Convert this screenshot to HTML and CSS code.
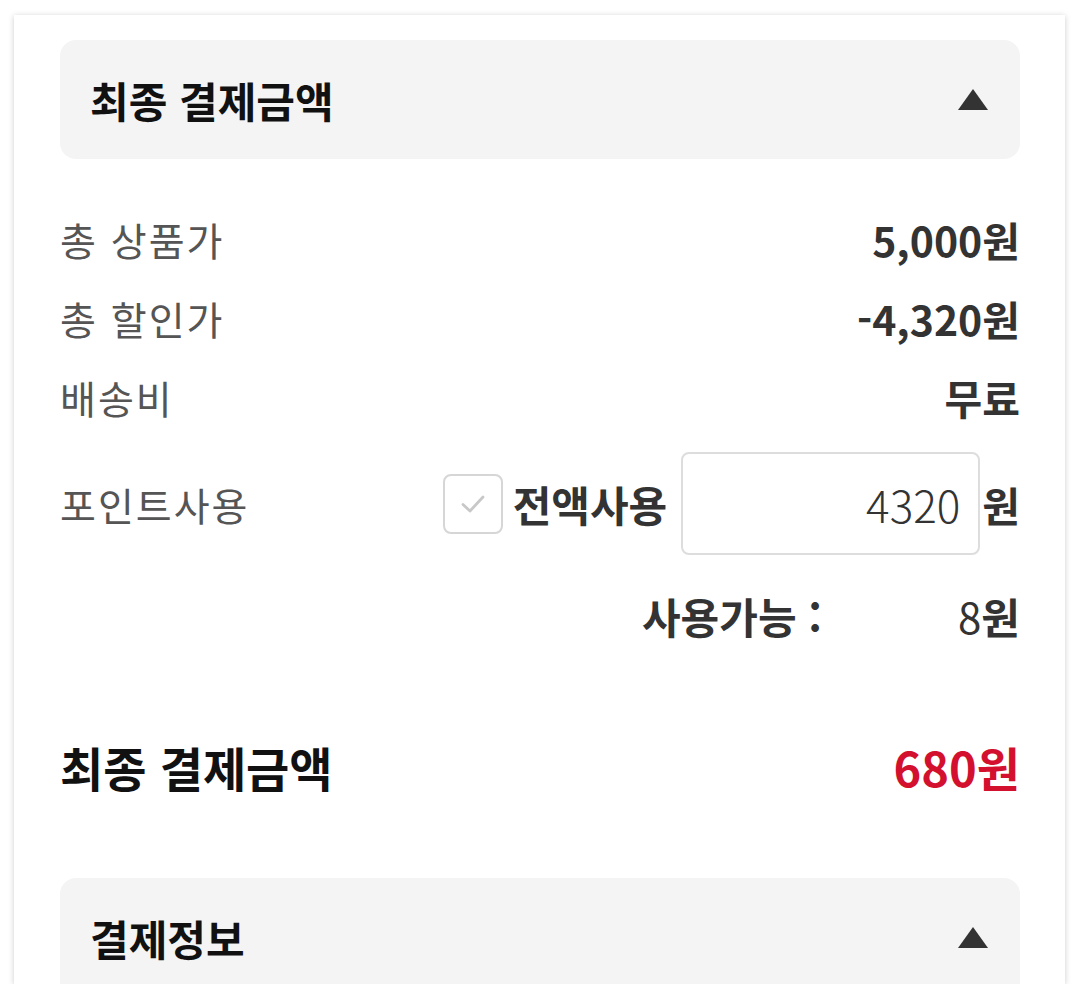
FILE: index.html
```html
<!DOCTYPE html>
<html lang="ko">
<head>
  <meta charset="UTF-8">
  <title>최종 결제금액</title>
  <meta name="viewport" content="width=device-width, initial-scale=1.0">
  <link rel="stylesheet" href="styles.css">
</head>
<body>

<div class="card">

  <!-- 최종 결제금액 아코디언 -->
  <div class="acc-head">
    <h2>최종 결제금액</h2>
    <span class="arrow-up"></span>
  </div>

  <div class="price-list">
    <div class="price-row">
      <span class="label">총 상품가</span>
      <span class="value">5,000원</span>
    </div>
    <div class="price-row">
      <span class="label">총 할인가</span>
      <span class="value">-4,320원</span>
    </div>
    <div class="price-row">
      <span class="label">배송비</span>
      <span class="value">무료</span>
    </div>

    <div class="point-row">
      <span class="label">포인트사용</span>
      <div class="point-ctrl">
        <label class="check-all">
          <span class="checkbox">
            <svg width="36" height="36" viewBox="0 0 36 36"><path d="M8 18.5 L15 25 L28 11" fill="none" stroke="#c8c8c8" stroke-width="2.8" stroke-linecap="round" stroke-linejoin="round"/></svg>
          </span>
          전액사용
        </label>
        <input class="point-input" type="text" value="4320">
        <span class="unit">원</span>
      </div>
    </div>

    <div class="avail-row">
      <span class="avail-label">사용가능 :</span>
      <span class="avail-value"><span class="num">8</span>원</span>
    </div>
  </div>

  <div class="total-row">
    <span class="total-label">최종 결제금액</span>
    <span class="total-value">680원</span>
  </div>

  <!-- 결제정보 아코디언 -->
  <div class="acc-head">
    <h2>결제정보</h2>
    <span class="arrow-up"></span>
  </div>

</div>

</body>
</html>
```

FILE: styles.css
```css
body {
  margin: 0;
  padding: 15px 15px 0 14px;
  background-color: #fff;
  font-family: "Noto Sans CJK KR", "Noto Sans", sans-serif;
  color: #333;
}
.card {
  box-sizing: border-box;
  height: 969px;
  overflow: hidden;
  padding: 25px 45px 0 46px;
  background-color: #fff;
  box-shadow: 0 1px 6px rgba(0, 0, 0, 0.2);
}
.acc-head {
  display: flex;
  align-items: center;
  justify-content: space-between;
  height: 119px;
  padding: 0 32px 0 30px;
  border-radius: 16px;
  background-color: #f4f4f4;
}
.acc-head h2 {
  margin: 0;
  font-size: 42px;
  font-weight: 700;
  color: #111;
}
.arrow-up {
  width: 0;
  height: 0;
  border-left: 15px solid transparent;
  border-right: 15px solid transparent;
  border-bottom: 21px solid #333;
}
.price-list {
  padding-top: 40px;
}
.price-row {
  display: flex;
  align-items: center;
  justify-content: space-between;
  height: 79px;
}
.label {
  font-size: 39px;
  letter-spacing: 2px;
  color: #555;
}
.value {
  font-size: 41px;
  font-weight: 700;
  color: #333;
}
.point-row {
  display: flex;
  align-items: center;
  justify-content: space-between;
  margin-top: 16px;
}
.point-ctrl {
  display: flex;
  align-items: center;
}
.check-all {
  display: flex;
  align-items: center;
  gap: 10px;
  font-size: 42px;
  font-weight: 700;
  color: #333;
}
.checkbox {
  display: flex;
  align-items: center;
  justify-content: center;
  width: 56px;
  height: 56px;
  border: 2px solid #d6d6d6;
  border-radius: 8px;
}
.point-input {
  box-sizing: border-box;
  width: 299px;
  height: 103px;
  margin-left: 14px;
  padding: 0 18px;
  border: 2px solid #ddd;
  border-radius: 8px;
  font-family: "Noto Sans CJK KR", sans-serif;
  font-size: 44px;
  font-weight: 300;
  color: #333;
  text-align: right;
}
.unit {
  margin-left: 2px;
  font-size: 41px;
  font-weight: 700;
}
.avail-row {
  display: flex;
  justify-content: flex-end;
  align-items: center;
  height: 60px;
  margin-top: 30px;
  font-size: 42px;
  font-weight: 700;
  color: #333;
}
.avail-value {
  min-width: 198px;
  text-align: right;
}
.avail-value .num {
  font-weight: 400;
}
.total-row {
  display: flex;
  align-items: center;
  justify-content: space-between;
  height: 60px;
  margin: 91px 0 82px;
}
.total-label {
  font-size: 47px;
  font-weight: 700;
  color: #111;
}
.total-value {
  font-size: 47px;
  font-weight: 700;
  color: #d3112e;
}
```
